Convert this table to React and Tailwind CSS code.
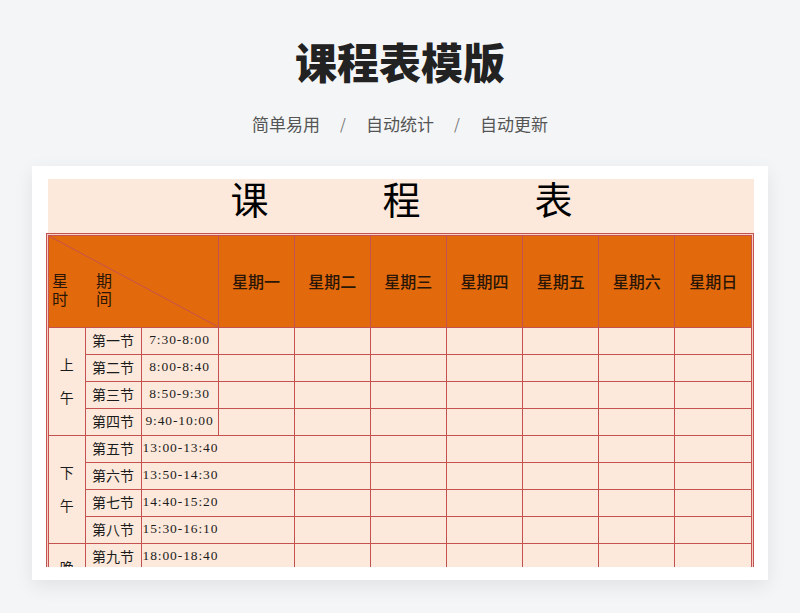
import React from 'react';

const days = ['星期一', '星期二', '星期三', '星期四', '星期五', '星期六', '星期日'];

const groups = [
  {
    label: ['上', '午'],
    rows: [
      ['第一节', '7:30-8:00'],
      ['第二节', '8:00-8:40'],
      ['第三节', '8:50-9:30'],
      ['第四节', '9:40-10:00'],
    ],
    split: true,
  },
  {
    label: ['下', '午'],
    rows: [
      ['第五节', '13:00-13:40'],
      ['第六节', '13:50-14:30'],
      ['第七节', '14:40-15:20'],
      ['第八节', '15:30-16:10'],
    ],
  },
  {
    label: ['晚', '上'],
    rows: [
      ['第九节', '18:00-18:40'],
      ['第十节', '18:50-19:30'],
      ['第十一节', '19:40-20:20'],
    ],
  },
];

const cjk = "font-['Noto_Sans_CJK_SC',sans-serif]";
const num = "font-['Liberation_Serif','Noto_Sans_CJK_SC',serif] text-[13.5px] tracking-[0.9px]";

const App = () => {
  return (
    <div className={`min-h-screen bg-[#f4f5f7] pt-[36px] ${cjk}`}>
      {/* Heading */}
      <h1 className="text-center text-[42px] leading-[50px] font-black text-[#222]">课程表模版</h1>
      <div className="mt-[27px] flex justify-center items-center gap-[20px] text-[17px] leading-[22px] text-[#555]">
        <span>简单易用</span>
        <span className="text-[#777] text-[15px]">/</span>
        <span>自动统计</span>
        <span className="text-[#777] text-[15px]">/</span>
        <span>自动更新</span>
      </div>

      {/* Sheet card */}
      <div className="mx-[32px] mt-[31px] bg-white pt-[13px] pb-[13px] px-[14px] shadow-[0_6px_18px_rgba(0,0,0,0.08)]">
        <div className="h-[388px] overflow-hidden">
          <div className="h-[54px] pb-[10px] ml-[2px] mr-[-1px] bg-[#fce9db] flex justify-center items-center gap-[114px] text-[38px] leading-[40px] text-black font-['Liberation_Serif','Noto_Sans_CJK_SC',serif]">
            <span>课</span>
            <span>程</span>
            <span>表</span>
          </div>

          <div className="border-[3px] border-double border-[#c4524f] bg-[#f6d0c4]">
            <table className="w-full table-fixed border-collapse border-hidden text-[14px] text-[#1c1c1c]">
              <colgroup>
                <col className="w-[36px]" />
                <col className="w-[56px]" />
                <col className="w-[77px]" />
                {days.map((d) => (
                  <col key={d} />
                ))}
              </colgroup>
              <thead>
                <tr className="h-[91px] bg-[#e2690c]">
                  <th colSpan={3} className="relative border border-[#c4524f] p-0 font-normal">
                    <svg
                      className="absolute inset-0 w-full h-full"
                      viewBox="0 0 100 100"
                      preserveAspectRatio="none"
                    >
                      <line x1="0" y1="0" x2="100" y2="100" stroke="#c4524f" strokeWidth="1" vectorEffect="non-scaling-stroke" />
                    </svg>
                    <div className="relative flex items-start pt-[16px] text-[16px] leading-[18px] text-[#2a1606]">
                      <span className="ml-[3px] flex flex-col">
                        <span>星</span>
                        <span>时</span>
                      </span>
                      <span className="ml-[28px] flex flex-col">
                        <span>期</span>
                        <span>间</span>
                      </span>
                    </div>
                  </th>
                  {days.map((d) => (
                    <th key={d} className="border border-[#c4524f] text-[16px] font-medium text-[#2a1606]">
                      {d}
                    </th>
                  ))}
                </tr>
              </thead>
              <tbody className="bg-[#fde9db]">
                {groups.map((g) =>
                  g.rows.map(([name, time], i) => (
                    <tr key={name} className="h-[27px]">
                      {i === 0 && (
                        <td rowSpan={g.rows.length} className="border border-[#c4524f] text-center align-middle">
                          <div className="flex flex-col items-center gap-[14px] leading-[19px]">
                            <span>{g.label[0]}</span>
                            <span>{g.label[1]}</span>
                          </div>
                        </td>
                      )}
                      <td className="border border-[#c4524f] text-center whitespace-nowrap">{name}</td>
                      {g.split ? (
                        <>
                          <td className={`border border-[#c4524f] text-center whitespace-nowrap ${num}`}>{time}</td>
                          <td className="border border-[#c4524f]"></td>
                        </>
                      ) : (
                        <td colSpan={2} className={`border border-[#c4524f] pl-[1px] text-left whitespace-nowrap ${num}`}>
                          {time}
                        </td>
                      )}
                      {days.slice(1).map((d) => (
                        <td key={d} className="border border-[#c4524f]"></td>
                      ))}
                    </tr>
                  ))
                )}
              </tbody>
            </table>
          </div>
        </div>
      </div>
    </div>
  );
};

export default App;
